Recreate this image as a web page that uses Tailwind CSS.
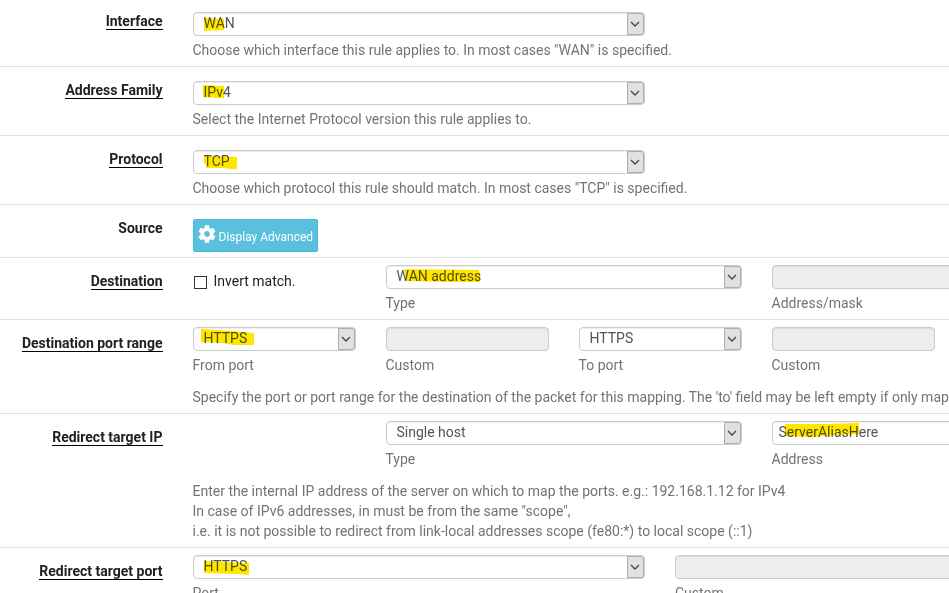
<!DOCTYPE html>
<html lang="en">
<head>
    <meta charset="UTF-8">
    <meta name="viewport" content="width=device-width, initial-scale=1.0">
    <title>Firewall | NAT | Port Forward | Edit</title>
    <script src="https://cdn.jsdelivr.net/npm/@tailwindcss/browser@4"></script>
</head>
<body class="h-screen overflow-hidden bg-white font-['Roboto',sans-serif] text-sm leading-5 text-[#212121]">
    <!-- Shared shapes -->
    <svg class="hidden">
        <symbol id="chevron" viewBox="0 0 10 6">
            <path d="M1 1l4 4 4-4" fill="none" stroke="#444" stroke-width="1.3"/>
        </symbol>
        <symbol id="cog" viewBox="2 2 20 20">
            <path fill="#fff" d="M19.14 12.94c.04-.3.06-.61.06-.94 0-.32-.02-.64-.07-.94l2.03-1.58c.18-.14.23-.41.12-.61l-1.92-3.32c-.12-.22-.37-.29-.59-.22l-2.39.96c-.5-.38-1.03-.7-1.62-.94l-.36-2.54c-.04-.24-.24-.41-.48-.41h-3.84c-.24 0-.43.17-.47.41l-.36 2.54c-.59.24-1.13.57-1.62.94l-2.39-.96c-.22-.08-.47 0-.59.22L2.74 8.87c-.12.21-.08.47.12.61l2.03 1.58c-.05.3-.09.63-.09.94s.02.64.07.94l-2.03 1.58c-.18.14-.23.41-.12.61l1.92 3.32c.12.22.37.29.59.22l2.39-.96c.5.38 1.03.7 1.62.94l.36 2.54c.05.24.24.41.48.41h3.84c.24 0 .44-.17.47-.41l.36-2.54c.59-.24 1.13-.56 1.62-.94l2.39.96c.22.08.47 0 .59-.22l1.92-3.32c.12-.22.07-.47-.12-.61l-2.01-1.58zM12 15.2c-1.77 0-3.2-1.43-3.2-3.2s1.43-3.2 3.2-3.2 3.2 1.43 3.2 3.2-1.43 3.2-3.2 3.2z"/>
        </symbol>
    </svg>

    <main class="w-full overflow-hidden">
        <!-- Interface -->
        <div class="flex gap-[30px] border-b border-[#e0e0e0] pt-3 pb-1.5">
            <div class="-mt-px flex w-[163px] shrink-0 items-start justify-end pr-[0.5px] font-bold"><span class="h-[19px] border-b border-black">Interface</span></div>
            <div>
                <div class="relative flex h-6 w-[452px] rounded border border-[#ccc] shadow-[inset_0_1px_1px_rgba(0,0,0,0.075)]">
                    <span class="grow pl-[9.5px] leading-[21px] text-[#555]">WAN</span>
                    <span class="flex w-[17px] items-center justify-center rounded-r-[3px] border border-[#adadad] bg-[#e1e1e1] pr-px"><svg class="h-1.5 w-2.5 shrink-0"><use href="#chevron"/></svg></span>
                    <svg class="absolute top-0 left-0 h-[22px] w-20 mix-blend-multiply"><path d="M10 5l20 1v11l-20 1z" fill="#ffe600"/></svg>
                </div>
                <p class="mt-1 -ml-[0.5px] text-[#737373]">Choose which interface this rule applies to. In most cases "WAN" is specified.</p>
            </div>
        </div>

        <!-- Address Family -->
        <div class="flex gap-[30px] border-b border-[#e0e0e0] pt-3.5 pb-1.5">
            <div class="-mt-px flex w-[163px] shrink-0 items-start justify-end pr-[0.5px] font-bold"><span class="h-[19px] border-b border-black">Address Family</span></div>
            <div>
                <div class="relative flex h-6 w-[452px] rounded border border-[#ccc] shadow-[inset_0_1px_1px_rgba(0,0,0,0.075)]">
                    <span class="grow pl-[9.5px] leading-[21px] text-[#555]">IPv4</span>
                    <span class="flex w-[17px] items-center justify-center rounded-r-[3px] border border-[#adadad] bg-[#e1e1e1] pr-px"><svg class="h-1.5 w-2.5 shrink-0"><use href="#chevron"/></svg></span>
                    <svg class="absolute top-0 left-0 h-[22px] w-20 mix-blend-multiply"><path d="M9 3l21 1v12l-7 0-14-1z" fill="#ffe600"/></svg>
                </div>
                <p class="mt-1 -ml-[0.5px] text-[#737373]">Select the Internet Protocol version this rule applies to.</p>
            </div>
        </div>

        <!-- Protocol -->
        <div class="flex gap-[30px] border-b border-[#e0e0e0] pt-3.5 pb-1.5">
            <div class="-mt-px flex w-[163px] shrink-0 items-start justify-end pr-[0.5px] font-bold"><span class="h-[19px] border-b border-black">Protocol</span></div>
            <div>
                <div class="relative flex h-6 w-[452px] rounded border border-[#ccc] shadow-[inset_0_1px_1px_rgba(0,0,0,0.075)]">
                    <span class="grow pl-[9.5px] leading-[21px] text-[#555]">TCP</span>
                    <span class="flex w-[17px] items-center justify-center rounded-r-[3px] border border-[#adadad] bg-[#e1e1e1] pr-px"><svg class="h-1.5 w-2.5 shrink-0"><use href="#chevron"/></svg></span>
                    <svg class="absolute top-0 left-0 h-[22px] w-20 mix-blend-multiply"><path d="M10 5l33 1v12l-7 0-6-1-18 0v-4l-2-1z" fill="#ffe600"/></svg>
                </div>
                <p class="mt-1 -ml-[0.5px] text-[#737373]">Choose which protocol this rule should match. In most cases "TCP" is specified.</p>
            </div>
        </div>

        <!-- Source -->
        <div class="flex gap-[30px] border-b border-[#e0e0e0] pt-3.5 pb-[5px]">
            <div class="-mt-px w-[163px] shrink-0 pr-[0.5px] text-right font-bold">Source</div>
            <button type="button" class="flex h-[33px] w-[125px] items-center rounded-xs border border-[#46b8da] bg-[#5bc0de] pl-1 text-xs text-white">
                <svg class="-mt-[3px] mr-[2.5px] h-[18px] w-[18px] shrink-0"><use href="#cog"/></svg>
                <span class="mt-0.5 whitespace-nowrap">Display Advanced</span>
            </button>
        </div>

        <!-- Destination -->
        <div class="flex gap-[30px] border-b border-[#e0e0e0] pt-[7px] pb-1.5">
            <div class="mt-1.5 flex w-[163px] shrink-0 items-start justify-end pr-[0.5px] font-bold"><span class="h-[19px] border-b border-black">Destination</span></div>
            <label class="mt-1.5 flex h-5 w-[163px] shrink-0 items-center pl-px">
                <span class="mt-0.5 mr-[6.5px] h-[13px] w-[13px] border border-[#333] bg-white"></span>Invert match.
            </label>
            <div class="shrink-0">
                <div class="relative flex h-6 w-[356px] rounded border border-[#ccc] shadow-[inset_0_1px_1px_rgba(0,0,0,0.075)]">
                    <span class="grow pl-[9.5px] leading-[21px] text-[#555]">WAN address</span>
                    <span class="flex w-[17px] items-center justify-center rounded-r-[3px] border border-[#adadad] bg-[#e1e1e1] pr-px"><svg class="h-1.5 w-2.5 shrink-0"><use href="#chevron"/></svg></span>
                    <svg class="absolute top-0 left-0 h-[22px] w-28 mix-blend-multiply"><path d="M17 3l75 1v2l1 1v9l-30 0-44-1z" fill="#ffe600"/></svg>
                </div>
                <p class="mt-1 -ml-[0.5px] text-[#737373]">Type</p>
            </div>
            <div class="shrink-0">
                <div class="h-6 w-[356px] rounded border border-[#ccc] bg-[#ededed] shadow-[inset_0_1px_1px_rgba(0,0,0,0.075)]"></div>
                <p class="mt-1 -ml-[0.5px] text-[#737373]">Address/mask</p>
            </div>
        </div>

        <!-- Destination port range -->
        <div class="flex gap-[30px] border-b border-[#e0e0e0] pt-[7px] pb-1.5">
            <div class="mt-1.5 flex w-[163px] shrink-0 items-start justify-end pr-[0.5px] font-bold"><span class="h-[19px] border-b border-black">Destination port range</span></div>
            <div>
                <div class="flex gap-[30px]">
                    <div>
                        <div class="relative flex h-6 w-[163px] rounded border border-[#ccc] shadow-[inset_0_1px_1px_rgba(0,0,0,0.075)]">
                            <span class="grow pl-[9.5px] leading-[21px] text-[#555]">HTTPS</span>
                            <span class="flex w-[17px] items-center justify-center rounded-r-[3px] border border-[#adadad] bg-[#e1e1e1] pr-px"><svg class="h-1.5 w-2.5 shrink-0"><use href="#chevron"/></svg></span>
                            <svg class="absolute top-0 left-0 h-[22px] w-20 mix-blend-multiply"><path d="M7 1l31 2 22 2v12l-20 0-12-2-21-1z" fill="#ffe600"/></svg>
                        </div>
                        <p class="mt-1 -ml-[0.5px] text-[#737373]">From port</p>
                    </div>
                    <div>
                        <div class="h-6 w-[163px] rounded border border-[#ccc] bg-[#ededed] shadow-[inset_0_1px_1px_rgba(0,0,0,0.075)]"></div>
                        <p class="mt-1 -ml-[0.5px] text-[#737373]">Custom</p>
                    </div>
                    <div>
                        <div class="flex h-6 w-[163px] rounded border border-[#ccc] shadow-[inset_0_1px_1px_rgba(0,0,0,0.075)]">
                            <span class="grow pl-[9.5px] leading-[21px] text-[#555]">HTTPS</span>
                            <span class="flex w-[17px] items-center justify-center rounded-r-[3px] border border-[#adadad] bg-[#e1e1e1] pr-px"><svg class="h-1.5 w-2.5 shrink-0"><use href="#chevron"/></svg></span>
                        </div>
                        <p class="mt-1 -ml-[0.5px] text-[#737373]">To port</p>
                    </div>
                    <div>
                        <div class="h-6 w-[163px] rounded border border-[#ccc] bg-[#ededed] shadow-[inset_0_1px_1px_rgba(0,0,0,0.075)]"></div>
                        <p class="mt-1 -ml-[0.5px] text-[#737373]">Custom</p>
                    </div>
                </div>
                <p class="mt-3 -ml-[0.5px] whitespace-nowrap text-[#737373]">Specify the port or port range for the destination of the packet for this mapping. The 'to' field may be left empty if only map</p>
            </div>
        </div>

        <!-- Redirect target IP -->
        <div class="flex gap-[30px] border-b border-[#e0e0e0] pt-[7px] pb-1.5">
            <div class="mt-1.5 flex w-[163px] shrink-0 items-start justify-end pr-[0.5px] font-bold"><span class="h-[19px] border-b border-black">Redirect target IP</span></div>
            <div>
                <div class="flex gap-[30px] pl-[193px]">
                    <div>
                        <div class="flex h-6 w-[356px] rounded border border-[#ccc] shadow-[inset_0_1px_1px_rgba(0,0,0,0.075)]">
                            <span class="grow pl-[9.5px] leading-[21px] text-[#555]">Single host</span>
                            <span class="flex w-[17px] items-center justify-center rounded-r-[3px] border border-[#adadad] bg-[#e1e1e1] pr-px"><svg class="h-1.5 w-2.5 shrink-0"><use href="#chevron"/></svg></span>
                        </div>
                        <p class="mt-1 -ml-[0.5px] text-[#737373]">Type</p>
                    </div>
                    <div>
                        <div class="relative h-6 w-[356px] rounded border border-[#ccc] pl-[5.5px] leading-[21px] text-[#555] shadow-[inset_0_1px_1px_rgba(0,0,0,0.075)]">
                            ServerAliasHere
                            <svg class="absolute top-0 left-0 h-[22px] w-28 mix-blend-multiply"><path d="M12 2l40 0 34-1v11l-26 1-20 2-28-1z" fill="#ffe600"/></svg>
                        </div>
                        <p class="mt-1 -ml-[0.5px] text-[#737373]">Address</p>
                    </div>
                </div>
                <p class="mt-3 -ml-[0.5px] text-[#737373]">
                    Enter the internal IP address of the server on which to map the ports. e.g.: 192.168.1.12 for IPv4<br>
                    In case of IPv6 addresses, in must be from the same "scope",<br>
                    i.e. it is not possible to redirect from link-local addresses scope (fe80:*) to local scope (::1)
                </p>
            </div>
        </div>

        <!-- Redirect target port -->
        <div class="flex gap-[30px] pt-[7px] pb-1.5">
            <div class="mt-1.5 flex w-[163px] shrink-0 items-start justify-end pr-[0.5px] font-bold"><span class="h-[19px] border-b border-black">Redirect target port</span></div>
            <div class="shrink-0">
                <div class="relative flex h-6 w-[452px] rounded border border-[#ccc] shadow-[inset_0_1px_1px_rgba(0,0,0,0.075)]">
                    <span class="grow pl-[9.5px] leading-[21px] text-[#555]">HTTPS</span>
                    <span class="flex w-[17px] items-center justify-center rounded-r-[3px] border border-[#adadad] bg-[#e1e1e1] pr-px"><svg class="h-1.5 w-2.5 shrink-0"><use href="#chevron"/></svg></span>
                    <svg class="absolute top-0 left-0 h-[22px] w-20 mix-blend-multiply"><path d="M10 5l36 2 9 0v12l-12-1-33-1z" fill="#ffe600"/></svg>
                </div>
                <p class="mt-1 -ml-[0.5px] text-[#737373]">Port</p>
            </div>
            <div class="shrink-0">
                <div class="h-6 w-[452px] rounded border border-[#ccc] bg-[#ededed] shadow-[inset_0_1px_1px_rgba(0,0,0,0.075)]"></div>
                <p class="mt-1 text-[#737373]">Custom</p>
            </div>
        </div>
    </main>
</body>
</html>
